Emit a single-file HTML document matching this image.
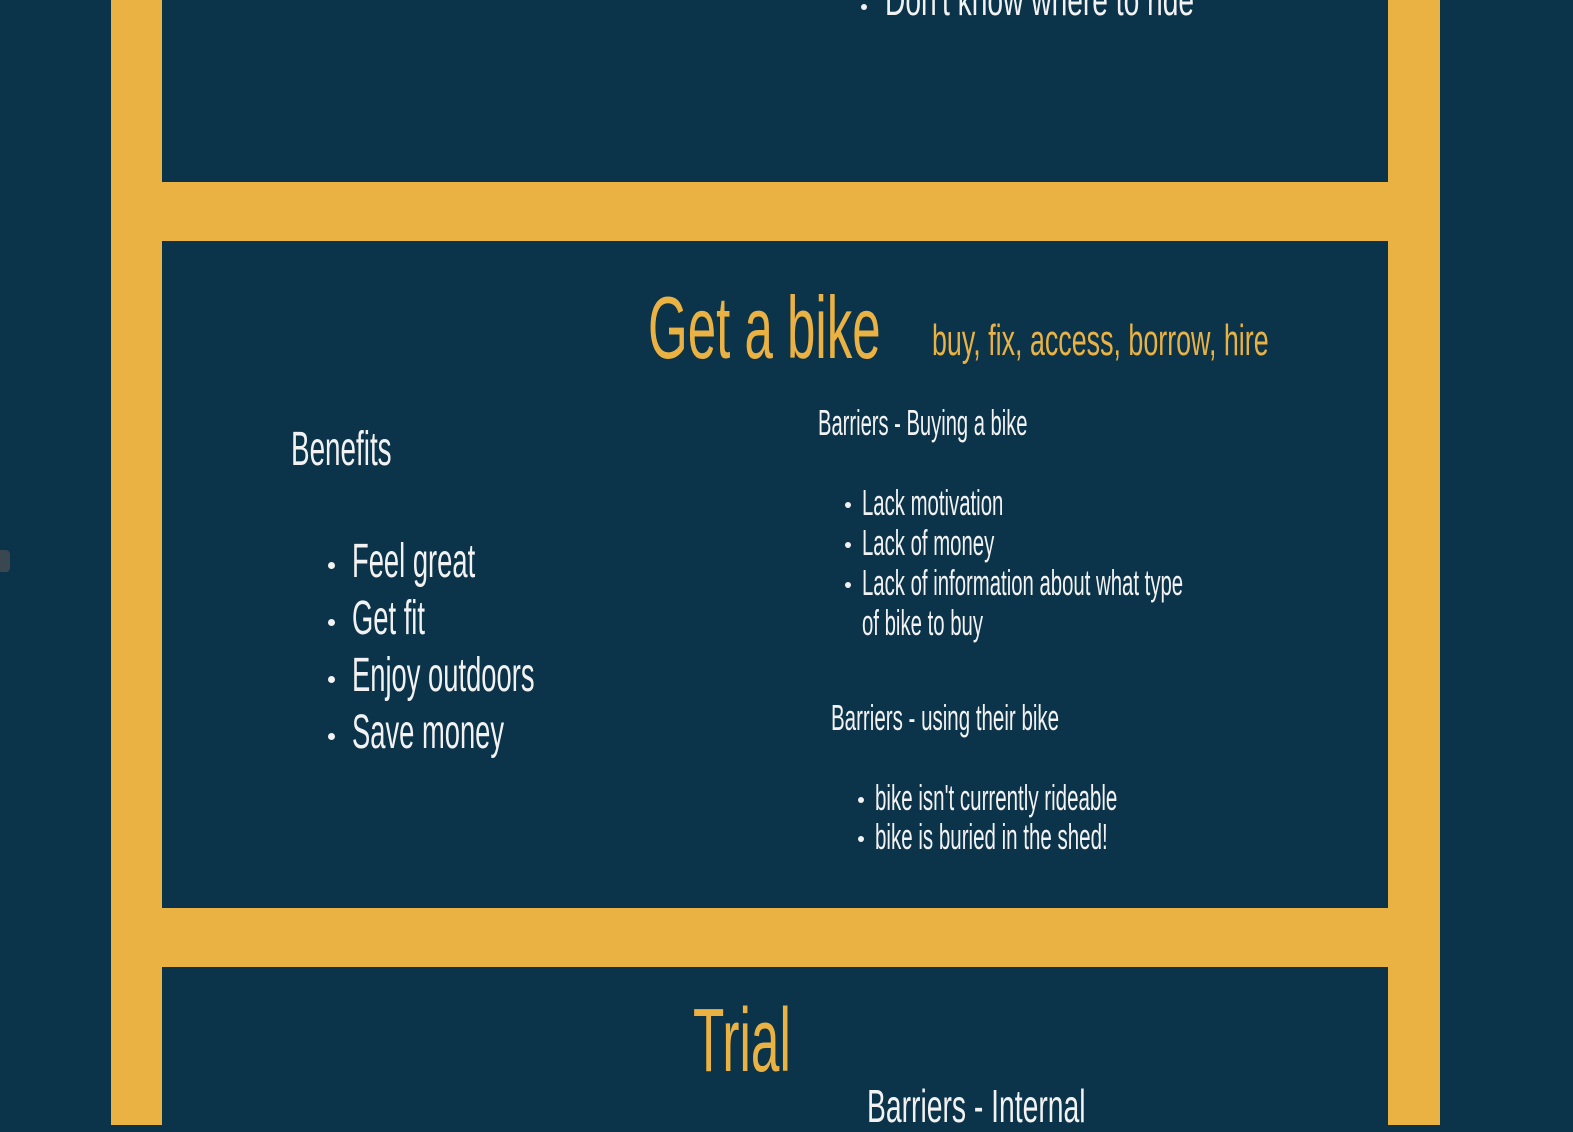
<!DOCTYPE html>
<html><head><meta charset="utf-8"><style>
html,body{margin:0;padding:0}
body{width:1573px;height:1125px;background:#0b3349;position:relative;overflow:hidden;font-family:"Liberation Sans",sans-serif}
.y{position:absolute;background:#eab143}
.p{position:absolute;background:#0b3349}
.t{position:absolute;white-space:nowrap;line-height:1;transform:scaleX(0.56);transform-origin:0 0;color:#f2f2f2}
.g{color:#eab143}
.b{position:absolute;width:6px;height:6px;border-radius:50%;background:#f2f2f2}
</style></head><body>
<div class="y" style="left:111px;top:0;width:1329px;height:1125px"></div>
<div class="p" style="left:162px;top:0;width:1226px;height:182px"></div>
<div class="p" style="left:162px;top:241px;width:1226px;height:667px"></div>
<div class="p" style="left:162px;top:967px;width:1226px;height:158px"></div>
<div style="position:absolute;left:0;top:550px;width:10px;height:22px;background:#3a4650;border-radius:0 4px 4px 0"></div>

<div class="b" style="left:861px;top:4px"></div>
<div class="t" style="left:885px;top:-21px;font-size:44px;transform:scaleX(0.64)">Don't know where to ride</div>

<div class="t g" style="left:648px;top:284px;font-size:88px;transform:scaleX(0.58)">Get a bike</div>
<div class="t g" style="left:932px;top:319px;font-size:44px;transform:scaleX(0.61)">buy, fix, access, borrow, hire</div>

<div class="t" style="left:291px;top:426px;font-size:48px;transform:scaleX(0.58)">Benefits</div>
<div class="b" style="left:328px;top:562px;width:7px;height:7px"></div>
<div class="t" style="left:352px;top:538px;font-size:48px;transform:scaleX(0.57)">Feel great</div>
<div class="b" style="left:328px;top:619px;width:7px;height:7px"></div>
<div class="t" style="left:352px;top:595px;font-size:48px;transform:scaleX(0.57)">Get fit</div>
<div class="b" style="left:328px;top:676px;width:7px;height:7px"></div>
<div class="t" style="left:352px;top:652px;font-size:48px;transform:scaleX(0.57)">Enjoy outdoors</div>
<div class="b" style="left:328px;top:733px;width:7px;height:7px"></div>
<div class="t" style="left:352px;top:709px;font-size:48px;transform:scaleX(0.57)">Save money</div>

<div class="t" style="left:818px;top:405px;font-size:36px">Barriers - Buying a bike</div>
<div class="b" style="left:845px;top:502px"></div>
<div class="t" style="left:862px;top:485px;font-size:36px;transform:scaleX(0.565)">Lack motivation</div>
<div class="b" style="left:845px;top:542px"></div>
<div class="t" style="left:862px;top:525px;font-size:36px;transform:scaleX(0.565)">Lack of money</div>
<div class="b" style="left:845px;top:582px"></div>
<div class="t" style="left:862px;top:565px;font-size:36px;transform:scaleX(0.565)">Lack of information about what type</div>
<div class="t" style="left:862px;top:605px;font-size:36px;transform:scaleX(0.565)">of bike to buy</div>

<div class="t" style="left:831px;top:700px;font-size:36px;transform:scaleX(0.57)">Barriers - using their bike</div>
<div class="b" style="left:858px;top:797px"></div>
<div class="t" style="left:875px;top:780px;font-size:36px;transform:scaleX(0.57)">bike isn't currently rideable</div>
<div class="b" style="left:858px;top:836px"></div>
<div class="t" style="left:875px;top:819px;font-size:36px;transform:scaleX(0.57)">bike is buried in the shed!</div>

<div class="t g" style="left:693px;top:996px;font-size:90px;transform:scaleX(0.57)">Trial</div>
<div class="t" style="left:867px;top:1083px;font-size:46px;transform:scaleX(0.615)">Barriers - Internal</div>
</body></html>
